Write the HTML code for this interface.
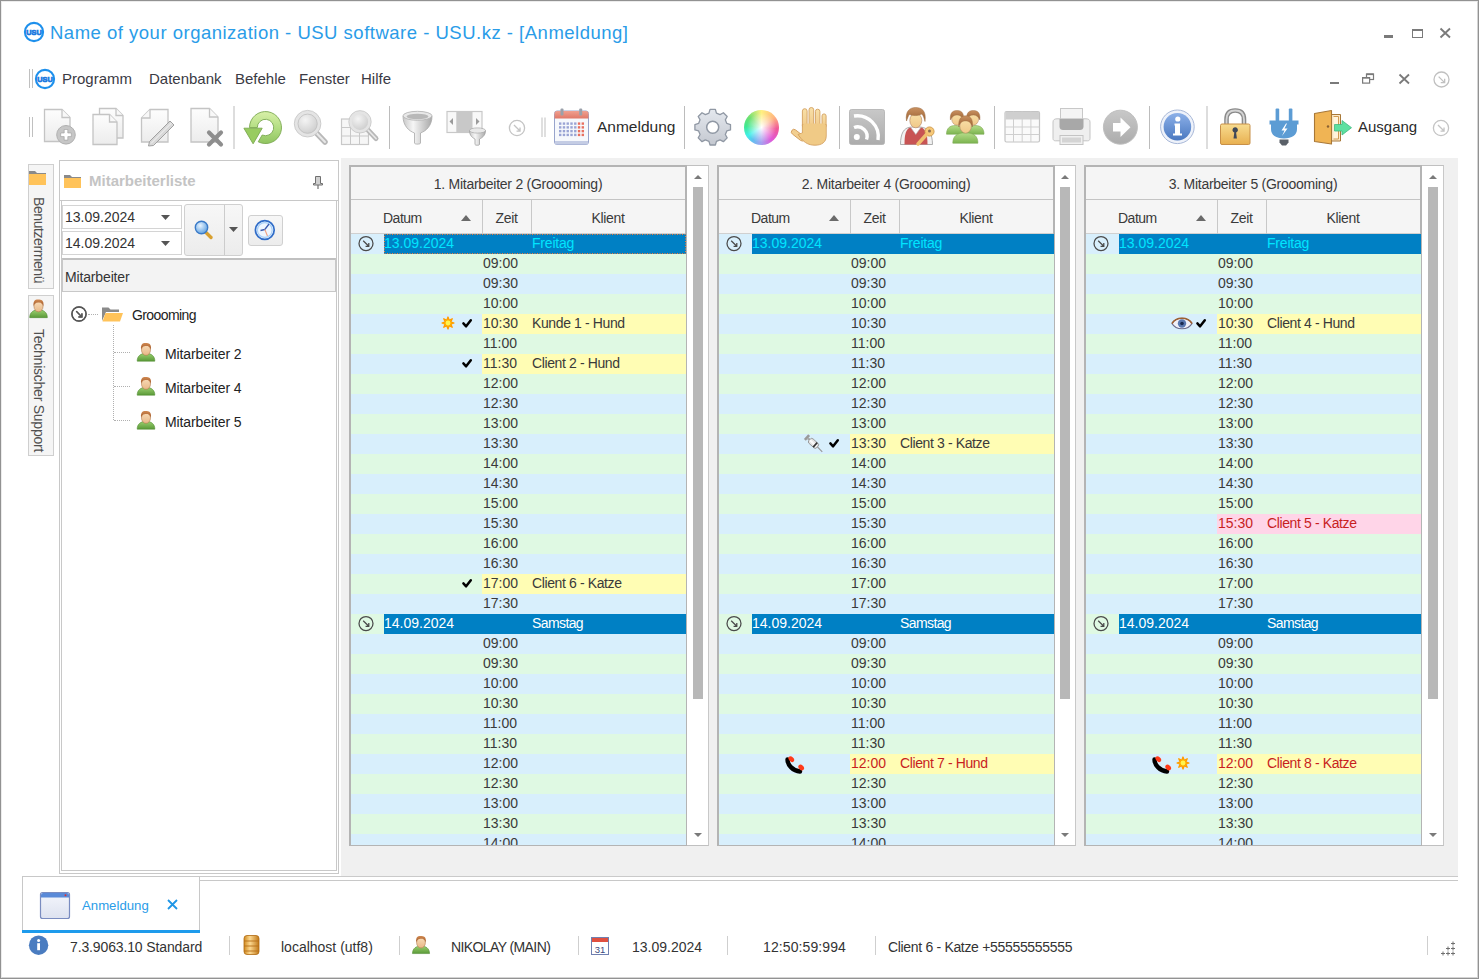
<!DOCTYPE html>
<html><head><meta charset="utf-8"><style>
*{box-sizing:border-box}
html,body{margin:0;padding:0}
body{width:1479px;height:979px;position:relative;overflow:hidden;background:#fff;font-family:"Liberation Sans",sans-serif;color:#333}
.a{position:absolute}
.t{position:absolute;white-space:nowrap}
svg{position:absolute;overflow:visible}
.row{position:absolute;height:20px}
.g{background:#dff9e3}
.b{background:#d8effc}
.rt{position:absolute;white-space:nowrap;font-size:14px;line-height:20px;top:-1.25px;color:#404040}
.ls4{letter-spacing:-0.38px}
</style></head><body>
<div class="a" style="left:0px;top:0px;width:1479px;height:979px;border:1px solid #929292;z-index:50;pointer-events:none"></div>
<div class="a" style="left:1px;top:1px;width:1477px;height:977px;border:1px solid #ececec;border-right-color:#d4d4d4;border-bottom-color:#d4d4d4;z-index:50;pointer-events:none"></div>
<!--TITLE-->
<svg style="left:22.9px;top:21.4px" width="22" height="22" viewBox="-11 -11 22 22"><circle cx="0" cy="0" r="9.1" fill="#fff" stroke="#1e90ec" stroke-width="2.1"/><text x="0" y="2.7" font-size="7.6" font-weight="bold" text-anchor="middle" textLength="15.5" lengthAdjust="spacingAndGlyphs" fill="#1a78e0" stroke="#1a78e0" stroke-width="0.7" font-family="Liberation Sans">USU</text></svg>
<div class="t" style="left:50px;top:21px;font-size:18.5px;line-height:24px;color:#2a9ce8;letter-spacing:0.5px">Name of your organization - USU software - USU.kz - [Anmeldung]</div>
<div class="a" style="left:1384px;top:35px;width:9px;height:2.5px;background:#7a7a7a"></div>
<div class="a" style="left:1411.5px;top:29px;width:11.5px;height:8.5px;border:1.2px solid #7a7a7a;border-top-width:2px"></div>
<svg style="left:1440px;top:28px" width="10" height="10" viewBox="0 0 10 10"><path d="M0.5 0.5L10 9.5M10 0.5L0.5 9.5" stroke="#7a7a7a" stroke-width="1.9"/></svg>
<!--MENU-->
<div class="a" style="left:29px;top:69px;width:1px;height:19px;background:#c0c0c0"></div>
<div class="a" style="left:32px;top:69px;width:1px;height:19px;background:#c0c0c0"></div>
<svg style="left:33.6px;top:68.1px" width="22" height="22" viewBox="-11 -11 22 22"><circle cx="0" cy="0" r="9.1" fill="#fff" stroke="#1e90ec" stroke-width="2.1"/><text x="0" y="2.7" font-size="7.6" font-weight="bold" text-anchor="middle" textLength="15.5" lengthAdjust="spacingAndGlyphs" fill="#1a78e0" stroke="#1a78e0" stroke-width="0.7" font-family="Liberation Sans">USU</text></svg>
<div class="t" style="left:62px;top:70px;font-size:15px;line-height:18px;color:#3a3a44;">Programm</div>
<div class="t" style="left:149px;top:70px;font-size:15px;line-height:18px;color:#3a3a44;">Datenbank</div>
<div class="t" style="left:235px;top:70px;font-size:15px;line-height:18px;color:#3a3a44;">Befehle</div>
<div class="t" style="left:299px;top:70px;font-size:15px;line-height:18px;color:#3a3a44;">Fenster</div>
<div class="t" style="left:361px;top:70px;font-size:15px;line-height:18px;color:#3a3a44;">Hilfe</div>
<div class="a" style="left:1330px;top:81.5px;width:9px;height:2.2px;background:#7a7a7a"></div>
<svg style="left:1362px;top:73px" width="11" height="10" viewBox="0 0 11 10"><rect x="4.5" y="1" width="7" height="5.5" fill="none" stroke="#7a7a7a" stroke-width="1.2"/><rect x="4.5" y="0.5" width="7" height="1.6" fill="#7a7a7a"/><rect x="0.6" y="4.6" width="7" height="5.5" fill="#fff" stroke="#7a7a7a" stroke-width="1.2"/><rect x="0.6" y="4" width="7" height="1.6" fill="#7a7a7a"/></svg>
<svg style="left:1399px;top:74px" width="10" height="10" viewBox="0 0 10 10"><path d="M0.5 0.5L10 9.5M10 0.5L0.5 9.5" stroke="#7a7a7a" stroke-width="1.8"/></svg>
<svg style="left:1432.5px;top:70.5px" width="17.0" height="17.0" viewBox="-8.5 -8.5 17.0 17.0"><circle cx="0" cy="0" r="7.5" fill="none" stroke="#c0c0c0" stroke-width="1.3"/><path d="M-2.85 -2.85L2.85 2.85M3.15 -0.75L3.15 3.15L-0.75 3.15" fill="none" stroke="#c0c0c0" stroke-width="1.3"/></svg>
<!--TOOLBAR-->
<!--ICONS-->
<svg style="left:0;top:0" width="1479" height="160" viewBox="0 0 1479 160">
<defs>
<linearGradient id="pg" x1="0" y1="0" x2="0" y2="1"><stop offset="0" stop-color="#fdfdfd"/><stop offset="1" stop-color="#ececec"/></linearGradient>
<linearGradient id="grn" x1="0" y1="0" x2="0" y2="1"><stop offset="0" stop-color="#d8f0a8"/><stop offset="0.55" stop-color="#b0dc80"/><stop offset="1" stop-color="#90c460"/></linearGradient>
<radialGradient id="lens" cx="0.4" cy="0.35" r="0.7"><stop offset="0" stop-color="#f4f4f4"/><stop offset="1" stop-color="#c8c8c8"/></radialGradient>
<linearGradient id="silver" x1="0" y1="0" x2="1" y2="0"><stop offset="0" stop-color="#c8c8c8"/><stop offset="0.35" stop-color="#f6f6f6"/><stop offset="1" stop-color="#a8a8a8"/></linearGradient>
<linearGradient id="calred" x1="0" y1="0" x2="0" y2="1"><stop offset="0" stop-color="#f0a090"/><stop offset="1" stop-color="#e07868"/></linearGradient>
<linearGradient id="gear" x1="0" y1="0" x2="0" y2="1"><stop offset="0" stop-color="#e4e8ee"/><stop offset="1" stop-color="#c4c8d0"/></linearGradient>
<radialGradient id="wheelw" cx="0.5" cy="0.5" r="0.5"><stop offset="0" stop-color="#fff" stop-opacity="1"/><stop offset="0.25" stop-color="#fff" stop-opacity="0.85"/><stop offset="1" stop-color="#fff" stop-opacity="0"/></radialGradient>
<linearGradient id="skin" x1="0" y1="0" x2="0" y2="1"><stop offset="0" stop-color="#f8e0a8"/><stop offset="1" stop-color="#f0c888"/></linearGradient>
<linearGradient id="hair" x1="0" y1="0" x2="0" y2="1"><stop offset="0" stop-color="#c89060"/><stop offset="1" stop-color="#9a6030"/></linearGradient>
<linearGradient id="green2" x1="0" y1="0" x2="0" y2="1"><stop offset="0" stop-color="#b4dc88"/><stop offset="1" stop-color="#7cb450"/></linearGradient>
<linearGradient id="gray1" x1="0" y1="0" x2="0" y2="1"><stop offset="0" stop-color="#c8c8c8"/><stop offset="1" stop-color="#acacac"/></linearGradient>
<linearGradient id="info" x1="0" y1="0" x2="0" y2="1"><stop offset="0" stop-color="#8cb0e8"/><stop offset="1" stop-color="#4a78c0"/></linearGradient>
<linearGradient id="gold" x1="0" y1="0" x2="0" y2="1"><stop offset="0" stop-color="#f8dc90"/><stop offset="1" stop-color="#e8b050"/></linearGradient>
<linearGradient id="shackle" x1="0" y1="0" x2="1" y2="0"><stop offset="0" stop-color="#909090"/><stop offset="0.5" stop-color="#d8d8d8"/><stop offset="1" stop-color="#909090"/></linearGradient>
</defs>
<rect x="29" y="117" width="1" height="20" fill="#c0c0c0"/><rect x="32" y="117" width="1" height="20" fill="#c0c0c0"/>
<path d="M44.5 109.5H62L70 117.5V141.5H44.5Z" fill="url(#pg)" stroke="#c4c4c4" stroke-width="1.3"/>
<path d="M62 109.5V117.5H70" fill="#f8f8f8" stroke="#c4c4c4" stroke-width="1.3"/>
<circle cx="66" cy="134.8" r="9.3" fill="#c6c6c6" stroke="#b0b0b0" stroke-width="1"/>
<path d="M64.2 129.5h3.6v3.5h3.5v3.6h-3.5v3.5h-3.6v-3.5h-3.5v-3.6h3.5Z" fill="#fff" stroke="#9a9a9a" stroke-width="0.6"/>
<path d="M99.5 108.5H116L123 115.5V138H99.5Z" fill="url(#pg)" stroke="#c4c4c4" stroke-width="1.3"/>
<path d="M116 108.5V115.5H123" fill="#f8f8f8" stroke="#c4c4c4" stroke-width="1.3"/>
<path d="M93 114.5H109.5L117 122V144.5H93Z" fill="url(#pg)" stroke="#c4c4c4" stroke-width="1.3"/>
<path d="M109.5 114.5V122H117" fill="#f8f8f8" stroke="#c4c4c4" stroke-width="1.3"/>
<path d="M150 109.5H168V142H141.5V118Z" fill="url(#pg)" stroke="#c4c4c4" stroke-width="1.3"/>
<path d="M150 109.5V118H141.5" fill="#f8f8f8" stroke="#c4c4c4" stroke-width="1.3"/>
<path d="M170 121L174 125L153.5 145.5L148.5 146L149.5 141.5Z" fill="#d8d8d8" stroke="#a0a0a0" stroke-width="1"/>
<path d="M171.5 123L151 143.5" stroke="#f4f4f4" stroke-width="1"/>
<path d="M191 108.5H209.5L218 117V142H191Z" fill="url(#pg)" stroke="#c4c4c4" stroke-width="1.3"/>
<path d="M209.5 108.5V117H218" fill="#f8f8f8" stroke="#c4c4c4" stroke-width="1.3"/>
<path d="M209 132.5L221 144.5M221 132.5L209 144.5" stroke="#8e8e8e" stroke-width="4.2" stroke-linecap="round"/>
<rect x="233.5" y="106" width="1" height="43" fill="#bcbcbc"/>
<rect x="389.0" y="106" width="1" height="43" fill="#bcbcbc"/>
<rect x="684.0" y="106" width="1" height="43" fill="#bcbcbc"/>
<rect x="839.0" y="106" width="1" height="43" fill="#bcbcbc"/>
<rect x="994.0" y="106" width="1" height="43" fill="#bcbcbc"/>
<rect x="1149.0" y="106" width="1" height="43" fill="#bcbcbc"/>
<rect x="1206.5" y="106" width="1" height="43" fill="#bcbcbc"/>
<path d="M249.5 127.6A16 16 0 1 1 258.2 141.8L262.2 135A8.2 8.2 0 1 0 257.3 127.6Z" fill="url(#grn)" stroke="#7aa850" stroke-width="0.9" stroke-linejoin="round"/>
<path d="M243.9 128.2H262.2L253.1 143.8Z" fill="#98cc60" stroke="#7aa850" stroke-width="0.9" stroke-linejoin="round"/>
<path d="M315.5 132L325 142" stroke="#b8b8b8" stroke-width="5.5" stroke-linecap="round"/>
<path d="M315.5 132L325 142" stroke="#e8e8e8" stroke-width="2" stroke-linecap="round"/>
<circle cx="307.6" cy="123.7" r="11.6" fill="url(#lens)" stroke="#e4e4e4" stroke-width="3.4"/>
<circle cx="307.6" cy="123.7" r="13.3" fill="none" stroke="#c4c4c4" stroke-width="0.8"/>
<circle cx="307.6" cy="123.7" r="9.6" fill="none" stroke="#c0c0c0" stroke-width="0.8"/>
<rect x="341.5" y="119" width="27" height="25.5" fill="#f6f6f6" stroke="#c8c8c8" stroke-width="1.2"/>
<path d="M341.5 127.5H368.5" stroke="#c8c8c8" stroke-width="1"/>
<path d="M341.5 136H368.5" stroke="#c8c8c8" stroke-width="1"/>
<path d="M350.5 119V144.5" stroke="#c8c8c8" stroke-width="1"/>
<path d="M359.5 119V144.5" stroke="#c8c8c8" stroke-width="1"/>
<path d="M367 129L376 138.5" stroke="#b8b8b8" stroke-width="5" stroke-linecap="round"/>
<path d="M367 129L376 138.5" stroke="#e8e8e8" stroke-width="1.8" stroke-linecap="round"/>
<circle cx="360" cy="121.8" r="9.6" fill="url(#lens)" stroke="#e4e4e4" stroke-width="3"/>
<circle cx="360" cy="121.8" r="11.2" fill="none" stroke="#c4c4c4" stroke-width="0.8"/>
<path d="M403 116C403 126 409 131 414.5 133V143C414.5 144.5 420.5 144.5 420.5 143V133C426 131 432 126 432 116Z" fill="url(#silver)" stroke="#a8a8a8" stroke-width="0.8"/>
<ellipse cx="417.5" cy="115.8" rx="14.5" ry="4.5" fill="#e8e8e8" stroke="#b0b0b0" stroke-width="0.8"/>
<ellipse cx="417.5" cy="116.5" rx="11" ry="2.8" fill="#b8b8b8"/>
<rect x="447" y="111.5" width="35" height="21" fill="#f8f8f8" stroke="#c8c8c8" stroke-width="1.2"/>
<rect x="456.3" y="112" width="16.2" height="20" fill="#c8c8c8"/>
<path d="M449.5 121.5L453 118V125Z" fill="#9a9a9a"/><path d="M479.5 121.5L476 118V125Z" fill="#9a9a9a"/>
<path d="M469.5 130.5C469.5 136 473 138 475 139V144.5C475 145.5 479.5 145.5 479.5 144.5V139C481.5 138 485.5 136 485.5 130.5Z" fill="url(#silver)" stroke="#a0a0a0" stroke-width="0.8"/>
<ellipse cx="477.5" cy="130.5" rx="8" ry="2.6" fill="#e8e8e8" stroke="#a8a8a8" stroke-width="0.7"/>
<circle cx="517" cy="128" r="7.6" fill="none" stroke="#c4c4c4" stroke-width="1.3"/><path d="M513.96 124.96L520.04 131.04M520.04 127.544V131.04H516.544" fill="none" stroke="#c4c4c4" stroke-width="1.3"/>
<rect x="541.5" y="117.5" width="1" height="19.5" fill="#c0c0c0"/><rect x="544.5" y="117.5" width="1" height="19.5" fill="#c0c0c0"/>
<rect x="554.5" y="111" width="34" height="33.5" rx="2.5" fill="#f6f8fc" stroke="#98a4cc" stroke-width="1"/>
<path d="M554.5 113.5A2.5 2.5 0 0 1 557 111H586A2.5 2.5 0 0 1 588.5 113.5V118.5H554.5Z" fill="url(#calred)"/>
<rect x="555" y="141" width="33" height="3.5" fill="#c4cce4"/>
<rect x="559.00" y="122.40" width="2.4" height="2.4" fill="#9aa4d4"/>
<rect x="559.00" y="126.17" width="2.4" height="2.4" fill="#9aa4d4"/>
<rect x="559.00" y="129.94" width="2.4" height="2.4" fill="#9aa4d4"/>
<rect x="559.00" y="133.71" width="2.4" height="2.4" fill="#9aa4d4"/>
<rect x="562.77" y="122.40" width="2.4" height="2.4" fill="#9aa4d4"/>
<rect x="562.77" y="126.17" width="2.4" height="2.4" fill="#9aa4d4"/>
<rect x="562.77" y="129.94" width="2.4" height="2.4" fill="#9aa4d4"/>
<rect x="562.77" y="133.71" width="2.4" height="2.4" fill="#9aa4d4"/>
<rect x="566.54" y="122.40" width="2.4" height="2.4" fill="#9aa4d4"/>
<rect x="566.54" y="126.17" width="2.4" height="2.4" fill="#9aa4d4"/>
<rect x="566.54" y="129.94" width="2.4" height="2.4" fill="#9aa4d4"/>
<rect x="566.54" y="133.71" width="2.4" height="2.4" fill="#9aa4d4"/>
<rect x="570.31" y="122.40" width="2.4" height="2.4" fill="#9aa4d4"/>
<rect x="570.31" y="126.17" width="2.4" height="2.4" fill="#9aa4d4"/>
<rect x="570.31" y="129.94" width="2.4" height="2.4" fill="#9aa4d4"/>
<rect x="570.31" y="133.71" width="2.4" height="2.4" fill="#9aa4d4"/>
<rect x="574.08" y="122.40" width="2.4" height="2.4" fill="#9aa4d4"/>
<rect x="574.08" y="126.17" width="2.4" height="2.4" fill="#9aa4d4"/>
<rect x="574.08" y="129.94" width="2.4" height="2.4" fill="#9aa4d4"/>
<rect x="574.08" y="133.71" width="2.4" height="2.4" fill="#9aa4d4"/>
<rect x="577.85" y="122.40" width="2.4" height="2.4" fill="#e87060"/>
<rect x="577.85" y="126.17" width="2.4" height="2.4" fill="#e87060"/>
<rect x="577.85" y="129.94" width="2.4" height="2.4" fill="#e87060"/>
<rect x="577.85" y="133.71" width="2.4" height="2.4" fill="#e87060"/>
<rect x="581.62" y="122.40" width="2.4" height="2.4" fill="#e87060"/>
<rect x="581.62" y="126.17" width="2.4" height="2.4" fill="#e87060"/>
<rect x="581.62" y="129.94" width="2.4" height="2.4" fill="#e87060"/>
<rect x="581.62" y="133.71" width="2.4" height="2.4" fill="#e87060"/>
<rect x="560.5" y="108.5" width="3" height="7" rx="1" fill="#9aa0aa"/><rect x="579.2" y="108.5" width="3" height="7" rx="1" fill="#9aa0aa"/>
<path d="M708.96 113.09L710.02 109.40L715.38 109.40L716.44 113.09L720.03 114.58L723.39 112.72L727.18 116.51L725.32 119.87L726.81 123.46L730.50 124.52L730.50 129.88L726.81 130.94L725.32 134.53L727.18 137.89L723.39 141.68L720.03 139.82L716.44 141.31L715.38 145.00L710.02 145.00L708.96 141.31L705.37 139.82L702.01 141.68L698.22 137.89L700.08 134.53L698.59 130.94L694.90 129.88L694.90 124.52L698.59 123.46L700.08 119.87L698.22 116.51L702.01 112.72L705.37 114.58Z" fill="url(#gear)" stroke="#9098a4" stroke-width="1.3" stroke-linejoin="round"/><circle cx="712.7" cy="127.2" r="6.0" fill="#fff" stroke="#9098a4" stroke-width="1.5"/>
<rect x="802.4" y="108.7" width="4.7" height="19.299999999999997" rx="2.35" fill="url(#skin)" stroke="#d4a060" stroke-width="0.9"/>
<rect x="809.0" y="107.5" width="4.7" height="20.5" rx="2.35" fill="url(#skin)" stroke="#d4a060" stroke-width="0.9"/>
<rect x="815.4" y="109.2" width="4.5" height="18.799999999999997" rx="2.25" fill="url(#skin)" stroke="#d4a060" stroke-width="0.9"/>
<rect x="822.0" y="113.9" width="4.1" height="14.099999999999994" rx="2.05" fill="url(#skin)" stroke="#d4a060" stroke-width="0.9"/>
<rect x="791.5" y="129" width="15.5" height="5.2" rx="2.6" transform="rotate(38 793.5 131.6)" fill="#f2cf90" stroke="#d4a060" stroke-width="0.9"/>
<path d="M802.4 124.5H826.2V136C826.2 142 822 145.2 815 145.2C809 145.2 805 143 801 138.5L798 134.5L802.4 133Z" fill="#f0ca86" stroke="#d4a060" stroke-width="0.9"/>
<path d="M803.2 123.5H825.4V135C825.4 140 822 144 815 144C810 144 806 142 802 138L799.5 134.6L803.2 133Z" fill="#f0ca86"/>
<rect x="849.5" y="109.5" width="35" height="35" rx="2" fill="url(#gray1)" stroke="#b0b0b0" stroke-width="0.8"/>
<circle cx="856.8" cy="137" r="3" fill="#fff"/>
<path d="M854 127.5A9.5 9.5 0 0 1 866.5 139.5" fill="none" stroke="#fff" stroke-width="3.4"/>
<path d="M854 116A21 21 0 0 1 878 140" fill="none" stroke="#fff" stroke-width="3.4"/>
<path d="M900.5 144.5C900.5 133 904 128 910 127.2H921.5C928 128 932.5 133 932.5 144.5Z" fill="#f2f2f2" stroke="#9a9a9a" stroke-width="0.8"/>
<path d="M904.5 144.5C904.5 134 906 129.5 910 127.6H921.5C925.5 129.5 927.5 134 927.5 144.5Z" fill="#c85454"/>
<path d="M910.5 127.2L915.8 134.5L921 127.2Z" fill="#fff" stroke="#b0b0b0" stroke-width="0.6"/>
<ellipse cx="915.8" cy="120.5" rx="6" ry="7.3" fill="url(#skin)" stroke="#b08060" stroke-width="0.6"/>
<path d="M906.5 121C905 111 910 107.5 915.5 107.5C922 107.5 926.5 111 925 121.5C924 118 923.5 115.5 921.5 114C918 116 913 116 909.5 114.5C908 116 907.5 118.5 906.5 121Z" fill="url(#hair)" stroke="#9a6a40" stroke-width="0.5"/>
<circle cx="929.5" cy="131.5" r="4.6" fill="#f6c878" stroke="#c89040" stroke-width="0.8"/>
<circle cx="929.5" cy="131" r="1.5" fill="#8a6a50"/>
<path d="M926.5 134.5L918 144" stroke="#f0c070" stroke-width="3.6" stroke-linecap="round"/>
<path d="M946.5 134.2C946.5 128.5 949.5 125.5 955.5 125.5C961.5 125.5 964.5 128.5 964.5 134.2Z" fill="url(#green2)" stroke="#7aa850" stroke-width="0.6"/>
<ellipse cx="957" cy="119.0" rx="5.3" ry="6.2" fill="url(#skin)" stroke="#b08060" stroke-width="0.5"/>
<path d="M950.4 120.0C949.5 111.5 954 110.5 957 110.5C960 110.5 964.5 111.5 963.6 120.0C962 116.5 960 115.0 957 115.0C954 115.0 952 116.5 950.4 120.0Z" fill="url(#hair)" stroke="#9a6a40" stroke-width="0.4"/>
<path d="M966 134.2C966 128.5 969 125.5 975.0 125.5C981 125.5 984 128.5 984 134.2Z" fill="url(#green2)" stroke="#7aa850" stroke-width="0.6"/>
<ellipse cx="973.3" cy="119.0" rx="5.3" ry="6.2" fill="url(#skin)" stroke="#b08060" stroke-width="0.5"/>
<path d="M966.6999999999999 120.0C965.8 111.5 970.3 110.5 973.3 110.5C976.3 110.5 980.8 111.5 979.9 120.0C978.3 116.5 976.3 115.0 973.3 115.0C970.3 115.0 968.3 116.5 966.6999999999999 120.0Z" fill="url(#hair)" stroke="#9a6a40" stroke-width="0.4"/>
<path d="M952.8 143.2C952.8 136 957 132.8 965.4 132.8C973.8 132.8 977.9 136 977.9 143.2Z" fill="url(#green2)" stroke="#7aa850" stroke-width="0.6"/>
<ellipse cx="965.6" cy="126" rx="5.8" ry="7.2" fill="url(#skin)" stroke="#b08060" stroke-width="0.5"/>
<path d="M958.8 127C958 118 962 115.8 965.6 115.8C969.5 115.8 973.5 118 972.4 127C971 122.5 969 121 965.6 121C962 121 960 122.5 958.8 127Z" fill="url(#hair)" stroke="#9a6a40" stroke-width="0.4"/>
<rect x="1005" y="111.5" width="34.5" height="30.5" rx="1.5" fill="#fafafa" stroke="#c4c4c4" stroke-width="1.2"/>
<rect x="1005.5" y="112" width="33.5" height="7.5" fill="#cfcfcf"/>
<path d="M1005 127H1039.5" stroke="#cfcfcf" stroke-width="1"/>
<path d="M1005 134.5H1039.5" stroke="#cfcfcf" stroke-width="1"/>
<path d="M1013.5 111.5V142" stroke="#cfcfcf" stroke-width="1"/>
<path d="M1022.2 111.5V142" stroke="#cfcfcf" stroke-width="1"/>
<path d="M1030.9 111.5V142" stroke="#cfcfcf" stroke-width="1"/>
<rect x="1060.5" y="108.5" width="22" height="15" fill="#f4f4f4" stroke="#c8c8c8" stroke-width="1"/>
<path d="M1053 122C1053 119.5 1055 118.8 1057 118.8H1086C1088 118.8 1090 119.5 1090 122V138.5C1090 140 1089 140.8 1087.5 140.8H1055.5C1054 140.8 1053 140 1053 138.5Z" fill="#efefef" stroke="#c4c4c4" stroke-width="1"/>
<path d="M1059.5 119H1083.5V126.5C1083.5 129 1082 130 1080 130H1063C1061 130 1059.5 129 1059.5 126.5Z" fill="#a8a8a8"/>
<rect x="1060" y="135.5" width="23" height="9" fill="#f0f0f0" stroke="#c4c4c4" stroke-width="1"/>
<rect x="1062" y="137.5" width="19" height="5" fill="#d4d4d4"/>
<circle cx="1120.4" cy="127.2" r="17" fill="url(#gray1)" stroke="#c0c0c0" stroke-width="1"/>
<path d="M1113 123H1120.5V117.5L1130.5 127.2L1120.5 137V131.5H1113Z" fill="#fff"/>
<circle cx="1177.4" cy="126.8" r="16.8" fill="#eef2fa" stroke="#a8b8d8" stroke-width="1"/>
<circle cx="1177.4" cy="126.8" r="13.8" fill="url(#info)"/>
<circle cx="1177.8" cy="119" r="2.6" fill="#fff"/>
<path d="M1174.5 123.5H1180V133.5H1182V135.5H1173V133.5H1175V125.5H1174.5Z" fill="#fff"/>
<path d="M1226.5 124V119.5C1226.5 113 1230 110.5 1235.2 110.5C1240.5 110.5 1244 113 1244 119.5V124" fill="none" stroke="#8a8a8a" stroke-width="4.6"/>
<path d="M1226.5 124V119.5C1226.5 113 1230 110.5 1235.2 110.5C1240.5 110.5 1244 113 1244 119.5V124" fill="none" stroke="#d4d4d4" stroke-width="1.8"/>
<rect x="1220.5" y="124" width="29.5" height="20.5" rx="1.5" fill="url(#gold)" stroke="#c89048" stroke-width="1"/>
<path d="M1233.5 138.5L1234.3 132.5C1232.8 131.8 1232.5 130.8 1232.5 130C1232.5 128.4 1233.7 127.2 1235.2 127.2C1236.7 127.2 1237.9 128.4 1237.9 130C1237.9 130.8 1237.6 131.8 1236.1 132.5L1236.9 138.5Z" fill="#404858"/>
<rect x="1275.6" y="108.5" width="3.6" height="13" rx="1" fill="#5c9cd4"/><rect x="1288.8" y="108.5" width="3.6" height="13" rx="1" fill="#5c9cd4"/>
<path d="M1269.5 120.5H1298.5V124.5H1297V129C1297 135 1292 138.5 1284 138.5C1276 138.5 1271 135 1271 129V124.5H1269.5Z" fill="#5c9cd4"/>
<path d="M1286 123.5L1281.5 130.5H1284.5L1282 136L1287.5 128.5H1284.5L1287 123.5Z" fill="#fff"/>
<path d="M1279.5 139.5H1288.5V142.5L1286 145.5H1282L1279.5 142.5Z" fill="#5a6068"/>
<path d="M1331.5 114.5H1340.5V141H1331.5" fill="#fbe8c8" stroke="#a87838" stroke-width="1"/>
<path d="M1333.5 116.5H1338.5V139H1333.5" fill="#fff4dc" stroke="#d09a50" stroke-width="1"/>
<path d="M1314.5 113.5L1331.5 110.5V144L1314.5 141.5Z" fill="#f0b454" stroke="#a87838" stroke-width="1.1" stroke-linejoin="round"/>
<circle cx="1328" cy="126.5" r="1.2" fill="#8a6030"/>
<path d="M1334.5 124.5H1342V120.5L1351.5 127.7L1342 135V131H1334.5Z" fill="#5ce0a0" stroke="#40b880" stroke-width="0.8"/>
<circle cx="1441" cy="128" r="7.6" fill="none" stroke="#c4c4c4" stroke-width="1.3"/><path d="M1437.96 124.96L1444.04 131.04M1444.04 127.544V131.04H1440.544" fill="none" stroke="#c4c4c4" stroke-width="1.3"/>
</svg>
<div class="a" style="left:743.5px;top:109.5px;width:35.5px;height:35.5px;border-radius:50%;background:radial-gradient(circle closest-side,rgba(255,255,255,1) 0%,rgba(255,255,255,.75) 20%,rgba(255,255,255,0) 85%),conic-gradient(from 0deg,#fff080,#ffb880 50deg,#f05898 95deg,#e058d8 140deg,#a8a0f0 180deg,#60c0f0 215deg,#40f0e8 240deg,#40e890 275deg,#70e070 310deg,#fff080 360deg)"></div>
<div class="t" style="left:597px;top:118px;font-size:15.5px;line-height:18px;color:#2b2b2b;">Anmeldung</div>
<div class="t" style="left:1358px;top:118px;font-size:15px;line-height:18px;color:#2b2b2b;">Ausgang</div>
<!--CONTENT-->
<div class="a" style="left:341px;top:158px;width:1117px;height:719px;background:#f0f0f0"></div>
<div class="a" style="left:200px;top:880px;width:1258px;height:1px;background:#c8c8c8"></div>
<div class="a" style="left:200px;top:876px;width:1258px;height:1px;background:#cacaca"></div>
<!--LEFTTABS-->
<div class="a" style="left:28px;top:164px;width:26px;height:125px;background:#f5f5f5;border:1px solid #cfcfcf"></div>
<div class="a" style="left:28px;top:295px;width:26px;height:161px;background:#f5f5f5;border:1px solid #cfcfcf"></div>
<div class="t" style="left:46.5px;top:196.5px;font-size:14px;letter-spacing:-0.42px;line-height:16px;color:#505050;transform-origin:0 0;transform:rotate(90deg)">Benutzermenü</div>
<div class="t" style="left:46.5px;top:328.5px;font-size:14px;letter-spacing:-0.24px;line-height:16px;color:#505050;transform-origin:0 0;transform:rotate(90deg)">Technischer Support</div>
<!--LEFTPANEL-->
<div class="a" style="left:59px;top:160px;width:280px;height:714px;border:1px solid #c8c8c8;background:#fff"></div>
<div class="a" style="left:61px;top:200px;width:276px;height:671px;border:1px solid #c8c8c8;border-top:none"></div>
<div class="a" style="left:60px;top:200px;width:278px;height:1px;background:#c8c8c8"></div>
<div class="t" style="left:89px;top:172px;font-size:15px;line-height:18px;color:#c4c4c4;font-weight:bold">Mitarbeiterliste</div>
<div class="a" style="left:62px;top:205px;width:120px;height:24px;border:1px solid #d4d4d4;background:#fff"></div>
<div class="a" style="left:62px;top:231px;width:120px;height:24px;border:1px solid #d4d4d4;background:#fff"></div>
<div class="t" style="left:65px;top:207.85px;font-size:14px;line-height:18px;letter-spacing:0px;color:#333;">13.09.2024</div>
<div class="t" style="left:65px;top:234.15px;font-size:14px;line-height:18px;letter-spacing:0px;color:#333;">14.09.2024</div>
<svg style="left:161px;top:215px" width="9" height="5" viewBox="0 0 9 5"><path d="M0 0H9L4.5 5Z" fill="#555"/></svg>
<svg style="left:161px;top:241px" width="9" height="5" viewBox="0 0 9 5"><path d="M0 0H9L4.5 5Z" fill="#555"/></svg>
<div class="a" style="left:184px;top:204px;width:59px;height:52px;border:1px solid #d0d0d0;border-radius:3px;background:linear-gradient(#f7f7f7,#ececec)"></div>
<div class="a" style="left:224px;top:205px;width:1px;height:50px;background:#cccccc"></div>
<svg style="left:229px;top:227px" width="9" height="5" viewBox="0 0 9 5"><path d="M0 0H9L4.5 5Z" fill="#555"/></svg>
<div class="a" style="left:248px;top:215px;width:35px;height:31px;border:1px solid #d0d0d0;border-radius:3px;background:linear-gradient(#f7f7f7,#ececec)"></div>
<div class="a" style="left:62px;top:258px;width:274px;height:34px;border:1px solid #c8c8c8;border-top:2px solid #c0c0c0;background:#f3f3f3"></div>
<div class="t" style="left:65px;top:267.65px;font-size:14px;line-height:18px;letter-spacing:-0.15px;color:#333;">Mitarbeiter</div>
<div class="t" style="left:132px;top:306.05px;font-size:14px;line-height:18px;letter-spacing:-0.6px;color:#222;">Groooming</div>
<div class="t" style="left:165px;top:345.15px;font-size:14px;line-height:18px;letter-spacing:-0.1px;color:#222;">Mitarbeiter 2</div>
<div class="t" style="left:165px;top:379.15px;font-size:14px;line-height:18px;letter-spacing:-0.1px;color:#222;">Mitarbeiter 4</div>
<div class="t" style="left:165px;top:413.15px;font-size:14px;line-height:18px;letter-spacing:-0.1px;color:#222;">Mitarbeiter 5</div>
<div class="a" style="left:113px;top:325px;width:1px;height:95px;border-left:1px dotted #b0b0b0"></div>
<div class="a" style="left:114px;top:352px;width:16px;height:1px;border-top:1px dotted #b0b0b0"></div>
<div class="a" style="left:114px;top:386px;width:16px;height:1px;border-top:1px dotted #b0b0b0"></div>
<div class="a" style="left:114px;top:420px;width:16px;height:1px;border-top:1px dotted #b0b0b0"></div>
<div class="a" style="left:88px;top:314px;width:10px;height:1px;border-top:1px dotted #b0b0b0"></div>
<svg style="left:71px;top:306px" width="16" height="16" viewBox="-8 -8 16 16"><circle cx="0" cy="0" r="7" fill="none" stroke="#555" stroke-width="1.4"/><path d="M-2.66 -2.66L2.66 2.66M2.94 -0.7000000000000001L2.94 2.94L-0.7000000000000001 2.94" fill="none" stroke="#555" stroke-width="1.4"/></svg>
<!--PANELS-->
<div class="a" style="left:349px;top:165px;width:338px;height:681px;border:2px solid #b4b4b4;border-bottom-width:1px;background:#fff"></div>
<div class="a" style="left:687px;top:165px;width:22px;height:681px;border:1px solid #c8c8c8;border-left:none;border-top:1px solid #c0c0c0;border-bottom:1px solid #c0c0c0;background:#fff"></div>
<svg style="left:693.5px;top:174.8px" width="8" height="4" viewBox="0 0 8 4"><path d="M0 4H8L4 0Z" fill="#7a7a7a"/></svg>
<svg style="left:693.5px;top:832.5px" width="8" height="4" viewBox="0 0 8 4"><path d="M0 0H8L4 4Z" fill="#7a7a7a"/></svg>
<div class="a" style="left:693px;top:187px;width:10px;height:512px;background:#b8b8b8"></div>
<div class="a" style="left:351px;top:167px;width:334px;height:32px;background:#f5f5f5"></div>
<div class="a" style="left:351px;top:199px;width:334px;height:1px;background:#c4c4c4"></div>
<div class="t" style="left:351px;top:174.95px;width:334px;text-align:center;font-size:14px;letter-spacing:-0.26px;line-height:18px;color:#3a3a3a">1. Mitarbeiter 2 (Groooming)</div>
<div class="a" style="left:351px;top:200px;width:334px;height:34px;background:#f5f5f5"></div>
<div class="a" style="left:351px;top:233px;width:334px;height:1px;background:#d0d0d0"></div>
<div class="a" style="left:482px;top:200px;width:1px;height:34px;background:#c8c8c8"></div>
<div class="a" style="left:531px;top:200px;width:1px;height:34px;background:#c8c8c8"></div>
<div class="t" style="left:383px;top:208.75px;font-size:14px;letter-spacing:-0.5px;line-height:18px;color:#3a3a3a">Datum</div>
<svg style="left:461px;top:215px" width="10" height="6" viewBox="0 0 10 6"><path d="M0 6H10L5 0Z" fill="#6a6a6a"/></svg>
<div class="t" style="left:482px;top:208.75px;width:49px;text-align:center;font-size:14px;letter-spacing:-0.3px;line-height:18px;color:#3a3a3a">Zeit</div>
<div class="t" style="left:531px;top:208.75px;width:154px;text-align:center;font-size:14px;letter-spacing:-0.33px;line-height:18px;color:#3a3a3a">Klient</div>
<div class="a" style="left:351px;top:234px;width:335px;height:611px;overflow:hidden">
<div class="row b" style="left:0;top:0px;width:335px">
<div class="a" style="left:33px;top:0;width:302px;height:20px;background:#0080c4"></div>
<div class="rt" style="left:33px;color:#00e5ff">13.09.2024</div>
<div class="rt" style="left:181px;color:#00e5ff;letter-spacing:-0.2px">Freitag</div>
</div>
<div class="row g" style="left:0;top:20px;width:335px">
<div class="rt" style="left:132px;color:#3a3a3a">09:00</div>
</div>
<div class="row b" style="left:0;top:40px;width:335px">
<div class="rt" style="left:132px;color:#3a3a3a">09:30</div>
</div>
<div class="row g" style="left:0;top:60px;width:335px">
<div class="rt" style="left:132px;color:#3a3a3a">10:00</div>
</div>
<div class="row b" style="left:0;top:80px;width:335px">
<div class="a" style="left:131px;top:0;width:204px;height:20px;background:#fffdb4"></div>
<div class="rt ls4" style="left:181px;color:#3a3a3a">Kunde 1 - Hund</div>
<div class="rt" style="left:132px;color:#3a3a3a">10:30</div>
</div>
<div class="row g" style="left:0;top:100px;width:335px">
<div class="rt" style="left:132px;color:#3a3a3a">11:00</div>
</div>
<div class="row b" style="left:0;top:120px;width:335px">
<div class="a" style="left:131px;top:0;width:204px;height:20px;background:#fffdb4"></div>
<div class="rt ls4" style="left:181px;color:#3a3a3a">Client 2 - Hund</div>
<div class="rt" style="left:132px;color:#3a3a3a">11:30</div>
</div>
<div class="row g" style="left:0;top:140px;width:335px">
<div class="rt" style="left:132px;color:#3a3a3a">12:00</div>
</div>
<div class="row b" style="left:0;top:160px;width:335px">
<div class="rt" style="left:132px;color:#3a3a3a">12:30</div>
</div>
<div class="row g" style="left:0;top:180px;width:335px">
<div class="rt" style="left:132px;color:#3a3a3a">13:00</div>
</div>
<div class="row b" style="left:0;top:200px;width:335px">
<div class="rt" style="left:132px;color:#3a3a3a">13:30</div>
</div>
<div class="row g" style="left:0;top:220px;width:335px">
<div class="rt" style="left:132px;color:#3a3a3a">14:00</div>
</div>
<div class="row b" style="left:0;top:240px;width:335px">
<div class="rt" style="left:132px;color:#3a3a3a">14:30</div>
</div>
<div class="row g" style="left:0;top:260px;width:335px">
<div class="rt" style="left:132px;color:#3a3a3a">15:00</div>
</div>
<div class="row b" style="left:0;top:280px;width:335px">
<div class="rt" style="left:132px;color:#3a3a3a">15:30</div>
</div>
<div class="row g" style="left:0;top:300px;width:335px">
<div class="rt" style="left:132px;color:#3a3a3a">16:00</div>
</div>
<div class="row b" style="left:0;top:320px;width:335px">
<div class="rt" style="left:132px;color:#3a3a3a">16:30</div>
</div>
<div class="row g" style="left:0;top:340px;width:335px">
<div class="a" style="left:131px;top:0;width:204px;height:20px;background:#fffdb4"></div>
<div class="rt ls4" style="left:181px;color:#3a3a3a">Client 6 - Katze</div>
<div class="rt" style="left:132px;color:#3a3a3a">17:00</div>
</div>
<div class="row b" style="left:0;top:360px;width:335px">
<div class="rt" style="left:132px;color:#3a3a3a">17:30</div>
</div>
<div class="row g" style="left:0;top:380px;width:335px">
<div class="a" style="left:33px;top:0;width:302px;height:20px;background:#0080c4"></div>
<div class="rt" style="left:33px;color:#ffffff">14.09.2024</div>
<div class="rt" style="left:181px;color:#ffffff;letter-spacing:-0.6px">Samstag</div>
</div>
<div class="row b" style="left:0;top:400px;width:335px">
<div class="rt" style="left:132px;color:#3a3a3a">09:00</div>
</div>
<div class="row g" style="left:0;top:420px;width:335px">
<div class="rt" style="left:132px;color:#3a3a3a">09:30</div>
</div>
<div class="row b" style="left:0;top:440px;width:335px">
<div class="rt" style="left:132px;color:#3a3a3a">10:00</div>
</div>
<div class="row g" style="left:0;top:460px;width:335px">
<div class="rt" style="left:132px;color:#3a3a3a">10:30</div>
</div>
<div class="row b" style="left:0;top:480px;width:335px">
<div class="rt" style="left:132px;color:#3a3a3a">11:00</div>
</div>
<div class="row g" style="left:0;top:500px;width:335px">
<div class="rt" style="left:132px;color:#3a3a3a">11:30</div>
</div>
<div class="row b" style="left:0;top:520px;width:335px">
<div class="rt" style="left:132px;color:#3a3a3a">12:00</div>
</div>
<div class="row g" style="left:0;top:540px;width:335px">
<div class="rt" style="left:132px;color:#3a3a3a">12:30</div>
</div>
<div class="row b" style="left:0;top:560px;width:335px">
<div class="rt" style="left:132px;color:#3a3a3a">13:00</div>
</div>
<div class="row g" style="left:0;top:580px;width:335px">
<div class="rt" style="left:132px;color:#3a3a3a">13:30</div>
</div>
<div class="row b" style="left:0;top:600px;width:335px">
<div class="rt" style="left:132px;color:#3a3a3a">14:00</div>
</div>
</div>
<div class="a" style="left:717px;top:165px;width:338px;height:681px;border:2px solid #b4b4b4;border-bottom-width:1px;background:#fff"></div>
<div class="a" style="left:1055px;top:165px;width:21px;height:681px;border:1px solid #c8c8c8;border-left:none;border-top:1px solid #c0c0c0;border-bottom:1px solid #c0c0c0;background:#fff"></div>
<svg style="left:1060.5px;top:174.8px" width="8" height="4" viewBox="0 0 8 4"><path d="M0 4H8L4 0Z" fill="#7a7a7a"/></svg>
<svg style="left:1060.5px;top:832.5px" width="8" height="4" viewBox="0 0 8 4"><path d="M0 0H8L4 4Z" fill="#7a7a7a"/></svg>
<div class="a" style="left:1060px;top:187px;width:10px;height:512px;background:#b8b8b8"></div>
<div class="a" style="left:719px;top:167px;width:334px;height:32px;background:#f5f5f5"></div>
<div class="a" style="left:719px;top:199px;width:334px;height:1px;background:#c4c4c4"></div>
<div class="t" style="left:719px;top:174.95px;width:334px;text-align:center;font-size:14px;letter-spacing:-0.26px;line-height:18px;color:#3a3a3a">2. Mitarbeiter 4 (Groooming)</div>
<div class="a" style="left:719px;top:200px;width:334px;height:34px;background:#f5f5f5"></div>
<div class="a" style="left:719px;top:233px;width:334px;height:1px;background:#d0d0d0"></div>
<div class="a" style="left:850px;top:200px;width:1px;height:34px;background:#c8c8c8"></div>
<div class="a" style="left:899px;top:200px;width:1px;height:34px;background:#c8c8c8"></div>
<div class="t" style="left:751px;top:208.75px;font-size:14px;letter-spacing:-0.5px;line-height:18px;color:#3a3a3a">Datum</div>
<svg style="left:829px;top:215px" width="10" height="6" viewBox="0 0 10 6"><path d="M0 6H10L5 0Z" fill="#6a6a6a"/></svg>
<div class="t" style="left:850px;top:208.75px;width:49px;text-align:center;font-size:14px;letter-spacing:-0.3px;line-height:18px;color:#3a3a3a">Zeit</div>
<div class="t" style="left:899px;top:208.75px;width:154px;text-align:center;font-size:14px;letter-spacing:-0.33px;line-height:18px;color:#3a3a3a">Klient</div>
<div class="a" style="left:719px;top:234px;width:335px;height:611px;overflow:hidden">
<div class="row b" style="left:0;top:0px;width:335px">
<div class="a" style="left:33px;top:0;width:302px;height:20px;background:#0080c4"></div>
<div class="rt" style="left:33px;color:#00e5ff">13.09.2024</div>
<div class="rt" style="left:181px;color:#00e5ff;letter-spacing:-0.2px">Freitag</div>
</div>
<div class="row g" style="left:0;top:20px;width:335px">
<div class="rt" style="left:132px;color:#3a3a3a">09:00</div>
</div>
<div class="row b" style="left:0;top:40px;width:335px">
<div class="rt" style="left:132px;color:#3a3a3a">09:30</div>
</div>
<div class="row g" style="left:0;top:60px;width:335px">
<div class="rt" style="left:132px;color:#3a3a3a">10:00</div>
</div>
<div class="row b" style="left:0;top:80px;width:335px">
<div class="rt" style="left:132px;color:#3a3a3a">10:30</div>
</div>
<div class="row g" style="left:0;top:100px;width:335px">
<div class="rt" style="left:132px;color:#3a3a3a">11:00</div>
</div>
<div class="row b" style="left:0;top:120px;width:335px">
<div class="rt" style="left:132px;color:#3a3a3a">11:30</div>
</div>
<div class="row g" style="left:0;top:140px;width:335px">
<div class="rt" style="left:132px;color:#3a3a3a">12:00</div>
</div>
<div class="row b" style="left:0;top:160px;width:335px">
<div class="rt" style="left:132px;color:#3a3a3a">12:30</div>
</div>
<div class="row g" style="left:0;top:180px;width:335px">
<div class="rt" style="left:132px;color:#3a3a3a">13:00</div>
</div>
<div class="row b" style="left:0;top:200px;width:335px">
<div class="a" style="left:131px;top:0;width:204px;height:20px;background:#fffdb4"></div>
<div class="rt ls4" style="left:181px;color:#3a3a3a">Client 3 - Katze</div>
<div class="rt" style="left:132px;color:#3a3a3a">13:30</div>
</div>
<div class="row g" style="left:0;top:220px;width:335px">
<div class="rt" style="left:132px;color:#3a3a3a">14:00</div>
</div>
<div class="row b" style="left:0;top:240px;width:335px">
<div class="rt" style="left:132px;color:#3a3a3a">14:30</div>
</div>
<div class="row g" style="left:0;top:260px;width:335px">
<div class="rt" style="left:132px;color:#3a3a3a">15:00</div>
</div>
<div class="row b" style="left:0;top:280px;width:335px">
<div class="rt" style="left:132px;color:#3a3a3a">15:30</div>
</div>
<div class="row g" style="left:0;top:300px;width:335px">
<div class="rt" style="left:132px;color:#3a3a3a">16:00</div>
</div>
<div class="row b" style="left:0;top:320px;width:335px">
<div class="rt" style="left:132px;color:#3a3a3a">16:30</div>
</div>
<div class="row g" style="left:0;top:340px;width:335px">
<div class="rt" style="left:132px;color:#3a3a3a">17:00</div>
</div>
<div class="row b" style="left:0;top:360px;width:335px">
<div class="rt" style="left:132px;color:#3a3a3a">17:30</div>
</div>
<div class="row g" style="left:0;top:380px;width:335px">
<div class="a" style="left:33px;top:0;width:302px;height:20px;background:#0080c4"></div>
<div class="rt" style="left:33px;color:#ffffff">14.09.2024</div>
<div class="rt" style="left:181px;color:#ffffff;letter-spacing:-0.6px">Samstag</div>
</div>
<div class="row b" style="left:0;top:400px;width:335px">
<div class="rt" style="left:132px;color:#3a3a3a">09:00</div>
</div>
<div class="row g" style="left:0;top:420px;width:335px">
<div class="rt" style="left:132px;color:#3a3a3a">09:30</div>
</div>
<div class="row b" style="left:0;top:440px;width:335px">
<div class="rt" style="left:132px;color:#3a3a3a">10:00</div>
</div>
<div class="row g" style="left:0;top:460px;width:335px">
<div class="rt" style="left:132px;color:#3a3a3a">10:30</div>
</div>
<div class="row b" style="left:0;top:480px;width:335px">
<div class="rt" style="left:132px;color:#3a3a3a">11:00</div>
</div>
<div class="row g" style="left:0;top:500px;width:335px">
<div class="rt" style="left:132px;color:#3a3a3a">11:30</div>
</div>
<div class="row b" style="left:0;top:520px;width:335px">
<div class="a" style="left:131px;top:0;width:204px;height:20px;background:#fffdb4"></div>
<div class="rt ls4" style="left:181px;color:#c81e1e">Client 7 - Hund</div>
<div class="rt" style="left:132px;color:#c81e1e">12:00</div>
</div>
<div class="row g" style="left:0;top:540px;width:335px">
<div class="rt" style="left:132px;color:#3a3a3a">12:30</div>
</div>
<div class="row b" style="left:0;top:560px;width:335px">
<div class="rt" style="left:132px;color:#3a3a3a">13:00</div>
</div>
<div class="row g" style="left:0;top:580px;width:335px">
<div class="rt" style="left:132px;color:#3a3a3a">13:30</div>
</div>
<div class="row b" style="left:0;top:600px;width:335px">
<div class="rt" style="left:132px;color:#3a3a3a">14:00</div>
</div>
</div>
<div class="a" style="left:1084px;top:165px;width:338px;height:681px;border:2px solid #b4b4b4;border-bottom-width:1px;background:#fff"></div>
<div class="a" style="left:1422px;top:165px;width:22px;height:681px;border:1px solid #c8c8c8;border-left:none;border-top:1px solid #c0c0c0;border-bottom:1px solid #c0c0c0;background:#fff"></div>
<svg style="left:1428.5px;top:174.8px" width="8" height="4" viewBox="0 0 8 4"><path d="M0 4H8L4 0Z" fill="#7a7a7a"/></svg>
<svg style="left:1428.5px;top:832.5px" width="8" height="4" viewBox="0 0 8 4"><path d="M0 0H8L4 4Z" fill="#7a7a7a"/></svg>
<div class="a" style="left:1428px;top:187px;width:10px;height:512px;background:#b8b8b8"></div>
<div class="a" style="left:1086px;top:167px;width:334px;height:32px;background:#f5f5f5"></div>
<div class="a" style="left:1086px;top:199px;width:334px;height:1px;background:#c4c4c4"></div>
<div class="t" style="left:1086px;top:174.95px;width:334px;text-align:center;font-size:14px;letter-spacing:-0.26px;line-height:18px;color:#3a3a3a">3. Mitarbeiter 5 (Groooming)</div>
<div class="a" style="left:1086px;top:200px;width:334px;height:34px;background:#f5f5f5"></div>
<div class="a" style="left:1086px;top:233px;width:334px;height:1px;background:#d0d0d0"></div>
<div class="a" style="left:1217px;top:200px;width:1px;height:34px;background:#c8c8c8"></div>
<div class="a" style="left:1266px;top:200px;width:1px;height:34px;background:#c8c8c8"></div>
<div class="t" style="left:1118px;top:208.75px;font-size:14px;letter-spacing:-0.5px;line-height:18px;color:#3a3a3a">Datum</div>
<svg style="left:1196px;top:215px" width="10" height="6" viewBox="0 0 10 6"><path d="M0 6H10L5 0Z" fill="#6a6a6a"/></svg>
<div class="t" style="left:1217px;top:208.75px;width:49px;text-align:center;font-size:14px;letter-spacing:-0.3px;line-height:18px;color:#3a3a3a">Zeit</div>
<div class="t" style="left:1266px;top:208.75px;width:154px;text-align:center;font-size:14px;letter-spacing:-0.33px;line-height:18px;color:#3a3a3a">Klient</div>
<div class="a" style="left:1086px;top:234px;width:335px;height:611px;overflow:hidden">
<div class="row b" style="left:0;top:0px;width:335px">
<div class="a" style="left:33px;top:0;width:302px;height:20px;background:#0080c4"></div>
<div class="rt" style="left:33px;color:#00e5ff">13.09.2024</div>
<div class="rt" style="left:181px;color:#00e5ff;letter-spacing:-0.2px">Freitag</div>
</div>
<div class="row g" style="left:0;top:20px;width:335px">
<div class="rt" style="left:132px;color:#3a3a3a">09:00</div>
</div>
<div class="row b" style="left:0;top:40px;width:335px">
<div class="rt" style="left:132px;color:#3a3a3a">09:30</div>
</div>
<div class="row g" style="left:0;top:60px;width:335px">
<div class="rt" style="left:132px;color:#3a3a3a">10:00</div>
</div>
<div class="row b" style="left:0;top:80px;width:335px">
<div class="a" style="left:131px;top:0;width:204px;height:20px;background:#fffdb4"></div>
<div class="rt ls4" style="left:181px;color:#3a3a3a">Client 4 - Hund</div>
<div class="rt" style="left:132px;color:#3a3a3a">10:30</div>
</div>
<div class="row g" style="left:0;top:100px;width:335px">
<div class="rt" style="left:132px;color:#3a3a3a">11:00</div>
</div>
<div class="row b" style="left:0;top:120px;width:335px">
<div class="rt" style="left:132px;color:#3a3a3a">11:30</div>
</div>
<div class="row g" style="left:0;top:140px;width:335px">
<div class="rt" style="left:132px;color:#3a3a3a">12:00</div>
</div>
<div class="row b" style="left:0;top:160px;width:335px">
<div class="rt" style="left:132px;color:#3a3a3a">12:30</div>
</div>
<div class="row g" style="left:0;top:180px;width:335px">
<div class="rt" style="left:132px;color:#3a3a3a">13:00</div>
</div>
<div class="row b" style="left:0;top:200px;width:335px">
<div class="rt" style="left:132px;color:#3a3a3a">13:30</div>
</div>
<div class="row g" style="left:0;top:220px;width:335px">
<div class="rt" style="left:132px;color:#3a3a3a">14:00</div>
</div>
<div class="row b" style="left:0;top:240px;width:335px">
<div class="rt" style="left:132px;color:#3a3a3a">14:30</div>
</div>
<div class="row g" style="left:0;top:260px;width:335px">
<div class="rt" style="left:132px;color:#3a3a3a">15:00</div>
</div>
<div class="row b" style="left:0;top:280px;width:335px">
<div class="a" style="left:131px;top:0;width:204px;height:20px;background:#ffd5e8"></div>
<div class="rt ls4" style="left:181px;color:#c81e1e">Client 5 - Katze</div>
<div class="rt" style="left:132px;color:#c81e1e">15:30</div>
</div>
<div class="row g" style="left:0;top:300px;width:335px">
<div class="rt" style="left:132px;color:#3a3a3a">16:00</div>
</div>
<div class="row b" style="left:0;top:320px;width:335px">
<div class="rt" style="left:132px;color:#3a3a3a">16:30</div>
</div>
<div class="row g" style="left:0;top:340px;width:335px">
<div class="rt" style="left:132px;color:#3a3a3a">17:00</div>
</div>
<div class="row b" style="left:0;top:360px;width:335px">
<div class="rt" style="left:132px;color:#3a3a3a">17:30</div>
</div>
<div class="row g" style="left:0;top:380px;width:335px">
<div class="a" style="left:33px;top:0;width:302px;height:20px;background:#0080c4"></div>
<div class="rt" style="left:33px;color:#ffffff">14.09.2024</div>
<div class="rt" style="left:181px;color:#ffffff;letter-spacing:-0.6px">Samstag</div>
</div>
<div class="row b" style="left:0;top:400px;width:335px">
<div class="rt" style="left:132px;color:#3a3a3a">09:00</div>
</div>
<div class="row g" style="left:0;top:420px;width:335px">
<div class="rt" style="left:132px;color:#3a3a3a">09:30</div>
</div>
<div class="row b" style="left:0;top:440px;width:335px">
<div class="rt" style="left:132px;color:#3a3a3a">10:00</div>
</div>
<div class="row g" style="left:0;top:460px;width:335px">
<div class="rt" style="left:132px;color:#3a3a3a">10:30</div>
</div>
<div class="row b" style="left:0;top:480px;width:335px">
<div class="rt" style="left:132px;color:#3a3a3a">11:00</div>
</div>
<div class="row g" style="left:0;top:500px;width:335px">
<div class="rt" style="left:132px;color:#3a3a3a">11:30</div>
</div>
<div class="row b" style="left:0;top:520px;width:335px">
<div class="a" style="left:131px;top:0;width:204px;height:20px;background:#fffdb4"></div>
<div class="rt ls4" style="left:181px;color:#c81e1e">Client 8 - Katze</div>
<div class="rt" style="left:132px;color:#c81e1e">12:00</div>
</div>
<div class="row g" style="left:0;top:540px;width:335px">
<div class="rt" style="left:132px;color:#3a3a3a">12:30</div>
</div>
<div class="row b" style="left:0;top:560px;width:335px">
<div class="rt" style="left:132px;color:#3a3a3a">13:00</div>
</div>
<div class="row g" style="left:0;top:580px;width:335px">
<div class="rt" style="left:132px;color:#3a3a3a">13:30</div>
</div>
<div class="row b" style="left:0;top:600px;width:335px">
<div class="rt" style="left:132px;color:#3a3a3a">14:00</div>
</div>
</div>
<svg style="left:0;top:0;z-index:10" width="1479" height="979" viewBox="0 0 1479 979">
<defs>
<linearGradient id="skinb" x1="0" y1="0" x2="0" y2="1"><stop offset="0" stop-color="#f8dcb8"/><stop offset="1" stop-color="#e8b888"/></linearGradient>
<linearGradient id="hairb" x1="0" y1="0" x2="0" y2="1"><stop offset="0" stop-color="#d08850"/><stop offset="1" stop-color="#a05828"/></linearGradient>
<linearGradient id="greenb" x1="0" y1="0" x2="0" y2="1"><stop offset="0" stop-color="#9cd070"/><stop offset="1" stop-color="#5a9a38"/></linearGradient>
<linearGradient id="folder" x1="0" y1="0" x2="0" y2="1"><stop offset="0" stop-color="#ffd070"/><stop offset="1" stop-color="#f8b848"/></linearGradient>
<radialGradient id="mag" cx="0.4" cy="0.35" r="0.7"><stop offset="0" stop-color="#e8f4ff"/><stop offset="1" stop-color="#5a9ee0"/></radialGradient>
<linearGradient id="db" x1="0" y1="0" x2="1" y2="0"><stop offset="0" stop-color="#d08a20"/><stop offset="0.4" stop-color="#fcd890"/><stop offset="1" stop-color="#c07818"/></linearGradient>
<linearGradient id="tabic" x1="0" y1="0" x2="0" y2="1"><stop offset="0" stop-color="#f4f6fc"/><stop offset="1" stop-color="#dde2f0"/></linearGradient>
</defs>
<path d="M64 177V175H70L72 177H81V178H64Z" fill="#8a8a8a"/><rect x="64" y="178" width="17" height="10" fill="#ffc35a"/>
<path d="M315.5 176.5H320.5V183.5H322.5V185H313.5V183.5H315.5Z" fill="#d0d0d0" stroke="#707070" stroke-width="1"/><path d="M318 185V189" stroke="#707070" stroke-width="1.2"/>
<path d="M205.5 232L211 237.5" stroke="#d8a030" stroke-width="3.4" stroke-linecap="round"/>
<circle cx="201.5" cy="227.5" r="6.2" fill="url(#mag)" stroke="#3a7ac8" stroke-width="1.4"/>
<circle cx="264.8" cy="230" r="9.4" fill="#eef6ff" stroke="#2f6cc8" stroke-width="1.7"/>
<circle cx="264.8" cy="230" r="7.4" fill="none" stroke="#a8d0f8" stroke-width="1.2"/>
<path d="M264.8 229.5L269 224M264.8 229.5L260.5 230.5" stroke="#3a5cb0" stroke-width="1.3"/><path d="M264.8 229.5L267.5 236" stroke="#f0a080" stroke-width="1.1"/>
<path d="M29 173V171H35L37 173H46V174H29Z" fill="#8a8a8a"/><rect x="29" y="174" width="17" height="11" fill="#ffc35a"/>
<g transform="translate(38.5 299.5) scale(0.98)"><path d="M-9 18.5C-9 13 -5 10.5 0 10.5C5 10.5 9 13 9 18.5Z" fill="url(#greenb)" stroke="#4e8a30" stroke-width="0.6"/><ellipse cx="0" cy="7" rx="4.6" ry="5.6" fill="url(#skinb)" stroke="#b07848" stroke-width="0.6"/><path d="M-5 7C-6 0 -2 0 0 0C2.5 0 6 0.5 5 7C4 3.5 2 3 0 3C-2 3 -4 3.5 -5 7Z" fill="url(#hairb)"/></g>
<circle cx="79" cy="314" r="7.2" fill="none" stroke="#555" stroke-width="1.25"/><path d="M76.12 311.12L81.88 316.88M81.88 313.568V316.88H78.568" fill="none" stroke="#555" stroke-width="1.25"/>
<path d="M102 321V307.5H108.5L110.5 309.5H119V312H106Z" fill="#8a8a8a"/><path d="M102.5 321.5L105.5 313H123L120 321.5Z" fill="#ffc35a"/>
<g transform="translate(146 343) scale(0.98)"><path d="M-9 18.5C-9 13 -5 10.5 0 10.5C5 10.5 9 13 9 18.5Z" fill="url(#greenb)" stroke="#4e8a30" stroke-width="0.6"/><ellipse cx="0" cy="7" rx="4.6" ry="5.6" fill="url(#skinb)" stroke="#b07848" stroke-width="0.6"/><path d="M-5 7C-6 0 -2 0 0 0C2.5 0 6 0.5 5 7C4 3.5 2 3 0 3C-2 3 -4 3.5 -5 7Z" fill="url(#hairb)"/></g>
<g transform="translate(146 377) scale(0.98)"><path d="M-9 18.5C-9 13 -5 10.5 0 10.5C5 10.5 9 13 9 18.5Z" fill="url(#greenb)" stroke="#4e8a30" stroke-width="0.6"/><ellipse cx="0" cy="7" rx="4.6" ry="5.6" fill="url(#skinb)" stroke="#b07848" stroke-width="0.6"/><path d="M-5 7C-6 0 -2 0 0 0C2.5 0 6 0.5 5 7C4 3.5 2 3 0 3C-2 3 -4 3.5 -5 7Z" fill="url(#hairb)"/></g>
<g transform="translate(146 411) scale(0.98)"><path d="M-9 18.5C-9 13 -5 10.5 0 10.5C5 10.5 9 13 9 18.5Z" fill="url(#greenb)" stroke="#4e8a30" stroke-width="0.6"/><ellipse cx="0" cy="7" rx="4.6" ry="5.6" fill="url(#skinb)" stroke="#b07848" stroke-width="0.6"/><path d="M-5 7C-6 0 -2 0 0 0C2.5 0 6 0.5 5 7C4 3.5 2 3 0 3C-2 3 -4 3.5 -5 7Z" fill="url(#hairb)"/></g>
<circle cx="366" cy="243.5" r="7" fill="none" stroke="#4a4a4a" stroke-width="1.25"/><path d="M363.2 240.7L368.8 246.3M368.8 243.08V246.3H365.58" fill="none" stroke="#4a4a4a" stroke-width="1.25"/>
<circle cx="366" cy="623.5" r="7" fill="none" stroke="#4a4a4a" stroke-width="1.25"/><path d="M363.2 620.7L368.8 626.3M368.8 623.08V626.3H365.58" fill="none" stroke="#4a4a4a" stroke-width="1.25"/>
<circle cx="734" cy="243.5" r="7" fill="none" stroke="#4a4a4a" stroke-width="1.25"/><path d="M731.2 240.7L736.8 246.3M736.8 243.08V246.3H733.58" fill="none" stroke="#4a4a4a" stroke-width="1.25"/>
<circle cx="734" cy="623.5" r="7" fill="none" stroke="#4a4a4a" stroke-width="1.25"/><path d="M731.2 620.7L736.8 626.3M736.8 623.08V626.3H733.58" fill="none" stroke="#4a4a4a" stroke-width="1.25"/>
<circle cx="1101" cy="243.5" r="7" fill="none" stroke="#4a4a4a" stroke-width="1.25"/><path d="M1098.2 240.7L1103.8 246.3M1103.8 243.08V246.3H1100.58" fill="none" stroke="#4a4a4a" stroke-width="1.25"/>
<circle cx="1101" cy="623.5" r="7" fill="none" stroke="#4a4a4a" stroke-width="1.25"/><path d="M1098.2 620.7L1103.8 626.3M1103.8 623.08V626.3H1100.58" fill="none" stroke="#4a4a4a" stroke-width="1.25"/>
<rect x="384.5" y="234.5" width="301" height="19" fill="none" stroke="#ff7a30" stroke-width="1" stroke-dasharray="1 1.5"/>
<path d="M463.4 323.4L466.09999999999997 326.3L470.8 320.2" fill="none" stroke="#000" stroke-width="2.5" stroke-linecap="round" stroke-linejoin="round"/>
<path d="M463.4 363.4L466.09999999999997 366.3L470.8 360.2" fill="none" stroke="#000" stroke-width="2.5" stroke-linecap="round" stroke-linejoin="round"/>
<path d="M463.4 583.4L466.09999999999997 586.3L470.8 580.2" fill="none" stroke="#000" stroke-width="2.5" stroke-linecap="round" stroke-linejoin="round"/>
<path d="M830.4000000000001 443.4L833.1 446.3L837.8000000000001 440.2" fill="none" stroke="#000" stroke-width="2.5" stroke-linecap="round" stroke-linejoin="round"/>
<path d="M1197.4 323.4L1200.1000000000001 326.3L1204.8 320.2" fill="none" stroke="#000" stroke-width="2.5" stroke-linecap="round" stroke-linejoin="round"/>
<path d="M448.00 317.00L449.15 320.23L452.24 318.76L450.77 321.85L454.00 323.00L450.77 324.15L452.24 327.24L449.15 325.77L448.00 329.00L446.85 325.77L443.76 327.24L445.23 324.15L442.00 323.00L445.23 321.85L443.76 318.76L446.85 320.23Z" fill="#ffc800" stroke="#ff9c00" stroke-width="1.3" stroke-linejoin="round"/><circle cx="448" cy="323" r="2.4" fill="#fff450"/>
<path d="M1183.00 757.00L1184.15 760.23L1187.24 758.76L1185.77 761.85L1189.00 763.00L1185.77 764.15L1187.24 767.24L1184.15 765.77L1183.00 769.00L1181.85 765.77L1178.76 767.24L1180.23 764.15L1177.00 763.00L1180.23 761.85L1178.76 758.76L1181.85 760.23Z" fill="#ffc800" stroke="#ff9c00" stroke-width="1.3" stroke-linejoin="round"/><circle cx="1183" cy="763" r="2.4" fill="#fff450"/>
<g transform="translate(807 437.5) rotate(42)"><path d="M0 -3.2V3.2" stroke="#9a9a9a" stroke-width="2.6"/><path d="M1 0H4" stroke="#a8a8a8" stroke-width="2.4"/><rect x="3.5" y="-3" width="10.5" height="6" rx="2" fill="#e4e4e4" stroke="#8a8a8a" stroke-width="0.8"/><rect x="4" y="-1" width="9" height="2.2" fill="#fafafa"/><path d="M11 -3V3" stroke="#333" stroke-width="1.6"/><path d="M14 0L21 0.5" stroke="#9a9a9a" stroke-width="1.2"/></g>
<path d="M1172 323.5C1176 316.5 1188 316.5 1192 323.5C1188 330.5 1176 330.5 1172 323.5Z" fill="#f0f0f8" stroke="#6a6a8a" stroke-width="1.2"/><path d="M1172 323.5C1176 316.5 1188 316.5 1192 323.5" fill="none" stroke="#a06030" stroke-width="1.6"/><circle cx="1182" cy="323.5" r="4.2" fill="#5a78b0"/><circle cx="1182" cy="323.5" r="1.8" fill="#1a2a50"/>
<path d="M787.5 759.5C787.5 765.0 793.0 771.0 800.0 771.5" fill="none" stroke="#000" stroke-width="4.4" stroke-linecap="round"/><ellipse cx="791.3" cy="759.2" rx="3.3" ry="2.3" transform="rotate(45 791.3 759.2)" fill="#ff3a1a"/><ellipse cx="801.2" cy="767.5" rx="3.3" ry="2.3" transform="rotate(45 801.2 767.5)" fill="#ff3a1a"/>
<path d="M1154.5 759.5C1154.5 765.0 1160.0 771.0 1167.0 771.5" fill="none" stroke="#000" stroke-width="4.4" stroke-linecap="round"/><ellipse cx="1158.3" cy="759.2" rx="3.3" ry="2.3" transform="rotate(45 1158.3 759.2)" fill="#ff3a1a"/><ellipse cx="1168.2" cy="767.5" rx="3.3" ry="2.3" transform="rotate(45 1168.2 767.5)" fill="#ff3a1a"/>
<rect x="40.5" y="892.5" width="29" height="26" rx="2" fill="url(#tabic)" stroke="#7a8cc0" stroke-width="1.2"/>
<path d="M41 895A2 2 0 0 1 43 893H67A2 2 0 0 1 69 895V897.5H41Z" fill="#5a8ad8"/><circle cx="65.5" cy="895.3" r="1" fill="#e03030"/>
<circle cx="38.6" cy="945.2" r="9.7" fill="#4a7cc0"/><circle cx="38.6" cy="940.5" r="1.5" fill="#fff"/><rect x="37.2" y="943.2" width="2.8" height="7" fill="#fff"/>
<rect x="244" y="935.5" width="15" height="19" rx="3" fill="url(#db)" stroke="#b06a10" stroke-width="0.8"/>
<path d="M244 941H259M244 946H259M244 951H259" stroke="#b87018" stroke-width="0.9"/>
<g transform="translate(421 936) scale(0.95)"><path d="M-9 18.5C-9 13 -5 10.5 0 10.5C5 10.5 9 13 9 18.5Z" fill="url(#greenb)" stroke="#4e8a30" stroke-width="0.6"/><ellipse cx="0" cy="7" rx="4.6" ry="5.6" fill="url(#skinb)" stroke="#b07848" stroke-width="0.6"/><path d="M-5 7C-6 0 -2 0 0 0C2.5 0 6 0.5 5 7C4 3.5 2 3 0 3C-2 3 -4 3.5 -5 7Z" fill="url(#hairb)"/></g>
<rect x="591.5" y="937.5" width="17" height="17" fill="#fff" stroke="#7080b0" stroke-width="1"/><rect x="592" y="938" width="16" height="4" fill="#e05040"/>
<text x="600" y="952.5" font-size="9.5" font-family="Liberation Sans" text-anchor="middle" fill="#3a4a80">31</text>
<path d="M1451 943.5H1455M1453 941.5V945.5" stroke="#707070" stroke-width="1"/>
<path d="M1446 948.5H1450M1448 946.5V950.5" stroke="#707070" stroke-width="1"/>
<path d="M1451 948.5H1455M1453 946.5V950.5" stroke="#707070" stroke-width="1"/>
<path d="M1441 953.5H1445M1443 951.5V955.5" stroke="#707070" stroke-width="1"/>
<path d="M1446 953.5H1450M1448 951.5V955.5" stroke="#707070" stroke-width="1"/>
<path d="M1451 953.5H1455M1453 951.5V955.5" stroke="#707070" stroke-width="1"/>
</svg>
<!--TABBAR-->
<div class="a" style="left:22px;top:876px;width:178px;height:56px;border:1px solid #c8c8c8;border-bottom:none;background:#fff"></div>
<div class="a" style="left:22px;top:930px;width:178px;height:2.5px;background:#1e9bec"></div>
<div class="t" style="left:82px;top:897px;font-size:13.2px;line-height:18px;color:#2a9ce8;">Anmeldung</div>
<svg style="left:167px;top:899px" width="11" height="11" viewBox="0 0 11 11"><path d="M1 1L10 10M10 1L1 10" stroke="#1e96e6" stroke-width="1.8"/></svg>
<!--STATUS-->
<div class="t" style="left:70px;top:937.85px;font-size:14px;line-height:18px;letter-spacing:-0.13px;color:#333;">7.3.9063.10 Standard</div>
<div class="t" style="left:281px;top:937.85px;font-size:14px;line-height:18px;letter-spacing:0px;color:#333;">localhost (utf8)</div>
<div class="t" style="left:451px;top:937.85px;font-size:14px;line-height:18px;letter-spacing:-0.6px;color:#333;">NIKOLAY (MAIN)</div>
<div class="t" style="left:632px;top:937.85px;font-size:14px;line-height:18px;letter-spacing:0px;color:#333;">13.09.2024</div>
<div class="t" style="left:763px;top:937.85px;font-size:14px;line-height:18px;letter-spacing:0.1px;color:#333;">12:50:59:994</div>
<div class="t" style="left:888px;top:937.85px;font-size:14px;line-height:18px;letter-spacing:-0.32px;color:#333;">Client 6 - Katze +55555555555</div>
<div class="a" style="left:229px;top:936px;width:1px;height:19px;background:#cfcfcf"></div>
<div class="a" style="left:399px;top:936px;width:1px;height:19px;background:#cfcfcf"></div>
<div class="a" style="left:578px;top:936px;width:1px;height:19px;background:#cfcfcf"></div>
<div class="a" style="left:727px;top:936px;width:1px;height:19px;background:#cfcfcf"></div>
<div class="a" style="left:875px;top:936px;width:1px;height:19px;background:#cfcfcf"></div>
<div class="a" style="left:1427px;top:936px;width:1px;height:19px;background:#cfcfcf"></div>
</body></html>
